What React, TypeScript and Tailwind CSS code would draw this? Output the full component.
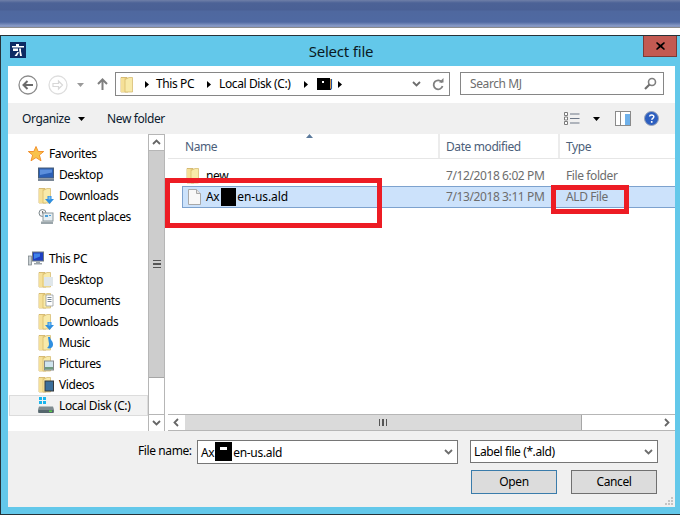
import type { ReactNode } from 'react'

const Folder = ({ children }: { children?: ReactNode }) => (
  <svg width="16" height="17" viewBox="0 0 16 17" className="shrink-0">
    <path d="M1 1.500h6l1 1v13.500H1z" fill="#e9cd7c" stroke="#c9a855" strokeWidth="0.7" />
    <path d="M5 3.500l4-2h3.500v14.500H5z" fill="#f8eaa9" stroke="#d2b566" strokeWidth="0.7" />
    <path d="M1 2h3.500v14H1z" fill="#f5e098" />
    {children}
  </svg>
)

const ArrowDownOverlay = () => (
  <>
    <path d="M9.500 9h4v3H16l-4.500 5L7 12h2.500z" fill="#2f8fe0" />
    <path d="M10.500 9.500h2v3h-2z" fill="#7cc0f5" />
  </>
)

const Monitor = () => (
  <svg width="16" height="15" viewBox="0 0 16 15" className="shrink-0">
    <rect x="0.500" y="1" width="15" height="10" fill="#2b5fb5" stroke="#4a5f78" />
    <path d="M2 2.500h12v3L2 8z" fill="#5c8fdc" />
    <rect x="0" y="11.500" width="16" height="2.500" fill="#7a8796" />
  </svg>
)

const Star = () => (
  <svg width="16" height="16" viewBox="0 0 16 16" className="shrink-0">
    <path d="M8 .500l2.200 5H15.700l-4.300 3.600 1.600 5.700L8 11.600l-5 3.200 1.600-5.700L.300 5.500h5.500z" fill="#f9c24a" stroke="#f08a24" strokeWidth="0.9" />
  </svg>
)

const Recent = () => (
  <svg width="16" height="16" viewBox="0 0 16 16" className="shrink-0">
    <circle cx="4.500" cy="4" r="3.500" fill="#f4f4f4" stroke="#7f8a8f" />
    <path d="M4.500 2v2.200H6.500" stroke="#555" fill="none" strokeWidth="0.8" />
    <rect x="5" y="4" width="10" height="8" fill="#e6eef2" stroke="#8b979c" />
    <path d="M7 6h3v2H7zM11 6h2v1h-2z" fill="#4c9fd8" />
    <rect x="3" y="12.500" width="12" height="2.500" fill="#9aa5aa" />
  </svg>
)

const ThisPc = () => (
  <svg width="16" height="16" viewBox="0 0 16 16" className="shrink-0">
    <rect x="0.500" y="5" width="3" height="9" fill="#c9d0d3" stroke="#767f84" strokeWidth="0.7" />
    <rect x="4.500" y="1" width="11" height="9" fill="#1d3fc2" stroke="#6e7a80" />
    <path d="M6 2.500h6v3L6 8z" fill="#3f82e8" />
    <path d="M8 10.500h4v1.500h2v1.500H6V12h2z" fill="#9da6ab" />
  </svg>
)

const Disk = () => (
  <svg width="16" height="17" viewBox="0 0 16 17" className="shrink-0">
    <path d="M1 0h3v3H1zM5 0h3v3H5zM1 4h3v3H1zM5 4h3v3H5z" fill="#19b5ee" />
    <path d="M1 9.500h14l1 3v3H0v-3z" fill="#7f8b90" />
    <rect x="0.500" y="13" width="15" height="3" fill="#55666d" />
    <rect x="11" y="13.500" width="3" height="1.500" fill="#56d147" />
  </svg>
)

const Caret = ({ color = '#000' }: { color?: string }) => (
  <svg width="7" height="4" viewBox="0 0 7 4" className="shrink-0">
    <path d="M0 0h7L3.500 4z" fill={color} />
  </svg>
)

const BreadArrow = () => (
  <svg width="4" height="7" viewBox="0 0 4 7" className="shrink-0">
    <path d="M0 0l4 3.500L0 7z" fill="#000" />
  </svg>
)

const Chevron = ({ color = '#6d6d6d' }: { color?: string }) => (
  <svg width="9" height="6" viewBox="0 0 9 6" className="shrink-0">
    <path d="M1 1l3.500 3.500L8 1" fill="none" stroke={color} strokeWidth="1.800" />
  </svg>
)

const NavItem = ({ icon, label, head, active }: { icon: ReactNode; label: string; head?: boolean; active?: boolean }) => (
  <div
    className={`h-[21px] flex items-center border ${active ? 'bg-[#f2f2f2] border-[#dcdcdc]' : 'border-transparent'} ${head ? 'pl-[18px] gap-[5px]' : 'pl-[28px] gap-[5px]'} ml-px`}
  >
    <div className="w-4 flex justify-center">{icon}</div>
    <span className="text-[#000] whitespace-nowrap">{label}</span>
  </div>
)

const ScrollGrip = ({ vertical }: { vertical?: boolean }) => (
  <div className={`flex gap-[2px] ${vertical ? 'flex-col w-[8px]' : 'h-[7px]'}`}>
    <div className={`bg-[#555] ${vertical ? 'h-[1.500px]' : 'w-[1.500px]'}`} />
    <div className={`bg-[#555] ${vertical ? 'h-[1.500px]' : 'w-[1.500px]'}`} />
    <div className={`bg-[#555] ${vertical ? 'h-[1.500px]' : 'w-[1.500px]'}`} />
  </div>
)

export default function App() {
  return (
    <div className="relative w-[680px] h-[515px] overflow-hidden bg-white text-[12px] leading-none tracking-[-0.4px] font-['Noto_Sans','Open_Sans',sans-serif]">
      {/* window behind */}
      <div className="h-[28px] bg-[linear-gradient(#6f7fa8_0px,#4c6296_3px,#4a6095_10px,#4f689f_11px,#4f69a2_22px,#8b9dc8_26px,#6c7fae_28px)] border-b border-[#8a8a8a]" />
      <div className="h-[7px] bg-white" />

      {/* dialog */}
      <div className="h-[480px] bg-[#63c8ea] border-t border-l border-b border-[#263238] flex flex-col">
        <div className="h-[30px] flex items-start shrink-0">
          <div className="ml-[9px] mt-[6px] w-4 h-4 bg-[#0c2a63] flex items-center justify-center">
            <svg width="14" height="14" viewBox="0 0 14 14">
              <path d="M1 3h4V1h3v2h5v1.500H1zM2 5.500h5V8H2zM8 5.500h2v3l1 4.500h-2zM6.500 9H8l-2 4H3.500z" fill="#fff" />
            </svg>
          </div>
          <div className="flex-1 text-center text-[15px] leading-[30px] text-[#0a1a24] pl-[13px] tracking-[-0.2px]">Select file</div>
          <div className="w-[34px] h-[21px] mr-[3px] bg-[#c35a52] border border-[#7c3a36] border-t-0 flex items-center justify-center">
            <svg width="9" height="8" viewBox="0 0 9 8">
              <path d="M1 0l3.500 2.800L8 0l1 1-3 3 3 3-1 1-3.500-2.800L1 8 0 7l3-3-3-3z" fill="#000" />
            </svg>
          </div>
        </div>

        <div className="ml-[7px] mr-[5px] h-[441px] bg-white flex flex-col">
          {/* address row */}
          <div className="h-[37px] flex items-start shrink-0">
            <div className="w-[107px] h-full flex items-center pl-[10px]">
              <svg width="20" height="20" viewBox="0 0 20 20" className="shrink-0">
                <circle cx="10" cy="10" r="9" fill="#fff" stroke="#8c8c8c" strokeWidth="1.300" />
                <path d="M15 10H6M9.500 6L5.500 10l4 4" fill="none" stroke="#6b6b6b" strokeWidth="2" />
              </svg>
              <svg width="20" height="20" viewBox="0 0 20 20" className="shrink-0 ml-[10px]">
                <circle cx="10" cy="10" r="9" fill="#fff" stroke="#dedede" strokeWidth="1.300" />
                <path d="M5 8.500h5.500V6l4 4-4 4v-2.500H5z" fill="none" stroke="#d8d8d8" strokeWidth="1.200" />
              </svg>
              <div className="ml-[9px]"><Caret color="#9a9a9a" /></div>
              <svg width="11" height="13" viewBox="0 0 11 13" className="shrink-0 ml-[13px]">
                <path d="M5.500 12V2M1 6l4.500-4.500L10 6" fill="none" stroke="#7f7f7f" strokeWidth="2" />
              </svg>
            </div>
            <div className="mt-[6px] w-[335px] h-[24px] border border-[#868686] flex items-center text-[#000] shrink-0">
              <div className="ml-[4px]"><Folder /></div>
              <div className="ml-[9px]"><BreadArrow /></div>
              <span className="ml-[7px]">This PC</span>
              <div className="ml-[13px]"><BreadArrow /></div>
              <span className="ml-[8px]">Local Disk (C:)</span>
              <div className="ml-[13px]"><BreadArrow /></div>
              <div className="ml-[9px] w-[13px] h-[12px] bg-black flex items-start justify-center"><div className="w-[2px] h-[2px] bg-white mt-[3px]" /></div>
              <span>J</span>
              <div className="ml-[6px]"><BreadArrow /></div>
              <div className="ml-auto mr-[5px] flex items-center gap-[11px]">
                <Chevron />
                <svg width="12" height="13" viewBox="0 0 12 13">
                  <path d="M10 4.500A4.500 4.500 0 1 0 10.500 8" fill="none" stroke="#7f7f7f" strokeWidth="1.800" />
                  <path d="M7 4.500h4.500V0z" fill="#7f7f7f" />
                </svg>
              </div>
            </div>
            <div className="mt-[6px] ml-[10px] w-[204px] h-[23px] border border-[#868686] flex items-center pl-[9px] pr-[4px] text-[#6d6d6d] shrink-0">
              <span>Search MJ</span>
              <svg width="13" height="13" viewBox="0 0 13 13" className="ml-auto mr-[2px]">
                <circle cx="8" cy="5" r="3.500" fill="none" stroke="#7f7f7f" strokeWidth="1.600" />
                <path d="M5.500 7.500L1 12" stroke="#6f6f6f" strokeWidth="2.200" />
              </svg>
            </div>
          </div>

          {/* toolbar */}
          <div className="h-[31px] bg-[#f0f0f0] flex items-center shrink-0 text-[#0a1a2e]">
            <span className="ml-[14px]">Organize</span>
            <div className="ml-[8px]"><Caret /></div>
            <span className="ml-[22px]">New folder</span>
            <div className="ml-auto flex items-center">
              <svg width="16" height="13" viewBox="0 0 16 13">
                <path d="M.500 .500h3v3h-3zM.500 5h3v3h-3zM.500 9.500h3v3h-3z" fill="#fff" stroke="#7b7b7b" />
                <path d="M6 2h9.500M6 6.500h9.500M6 11h9.500" stroke="#6c7686" />
              </svg>
              <div className="ml-[13px]"><Caret /></div>
              <svg width="16" height="15" viewBox="0 0 16 15" className="ml-[15px]">
                <rect x="0.500" y="0.500" width="15" height="14" fill="#fff" stroke="#8a8a8a" />
                <path d="M5.500 1v13" stroke="#8a8a8a" />
                <rect x="10" y="3" width="5" height="11" fill="#6fb1ea" />
              </svg>
              <svg width="15" height="15" viewBox="0 0 15 15" className="ml-[13px] mr-[16px]">
                <circle cx="7.500" cy="7.500" r="7" fill="#2d5fc0" stroke="#9aa4b8" />
                <path d="M5.500 5.500c.3-2 4.500-2 4.300.3 0 1.500-2 1.500-2 3" fill="none" stroke="#fff" strokeWidth="1.500" />
                <rect x="6.900" y="10" width="1.600" height="1.800" fill="#fff" />
              </svg>
            </div>
          </div>

          {/* main pane */}
          <div className="h-[297px] flex shrink-0">
            <div className="w-[140px] pt-[9px] shrink-0">
              <NavItem head icon={<Star />} label="Favorites" />
              <NavItem icon={<Monitor />} label="Desktop" />
              <NavItem icon={<Folder><ArrowDownOverlay /></Folder>} label="Downloads" />
              <NavItem icon={<Recent />} label="Recent places" />
              <div className="h-[21px]" />
              <NavItem head icon={<ThisPc />} label="This PC" />
              <NavItem icon={<Folder><rect x="6" y="6" width="9" height="9" fill="#dfe6ea" /></Folder>} label="Desktop" />
              <NavItem icon={<Folder><path d="M8 3h7v11H8z" fill="#fff" stroke="#8a8f92" strokeWidth="0.700" /><path d="M9.500 5.500h4M9.500 7.500h4M9.500 9.500h4" stroke="#7b8a9a" /></Folder>} label="Documents" />
              <NavItem icon={<Folder><ArrowDownOverlay /></Folder>} label="Downloads" />
              <NavItem icon={<Folder><path d="M10 3h2c0 3 3.500 4 3 8-.3 3-3 4-6 3 1-1 2-2 2-4z" fill="#2f8fe0" /></Folder>} label="Music" />
              <NavItem icon={<Folder><rect x="6.500" y="6" width="9" height="9" fill="#cfe4ee" stroke="#85898c" /><path d="M7 12h8v2.500H7z" fill="#6f9a7e" /></Folder>} label="Pictures" />
              <NavItem icon={<Folder><rect x="7" y="5" width="8.500" height="10" fill="#3b6f9c" stroke="#33393d" /></Folder>} label="Videos" />
              <NavItem active icon={<Disk />} label="Local Disk (C:)" />
            </div>

            {/* nav scrollbar */}
            <div className="w-[17px] flex flex-col border border-[#b6b6b6] border-y-0 shrink-0">
              <div className="h-[17px] border-y border-[#b6b6b6] flex items-center justify-center rotate-180"><Chevron color="#666" /></div>
              <div className="h-[227px] bg-[#cdcdcd] border-b border-[#a6a6a6] flex items-center justify-center"><ScrollGrip vertical /></div>
              <div className="flex-1" />
              <div className="h-[17px] border-t border-[#b6b6b6] flex items-center justify-center"><Chevron color="#666" /></div>
            </div>

            {/* file list */}
            <div className="flex-1 ml-[3px] flex flex-col min-w-0 relative">
              <div className="h-[25px] flex text-[#4c607a] border-b border-[#e6e6e6] shrink-0">
                <div className="w-[272px] border-r-2 border-[#ececec] pl-[17px] flex items-center pt-[1px]">Name</div>
                <div className="w-[120px] border-r-2 border-[#ececec] pl-[6px] flex items-center pt-[1px]">Date modified</div>
                <div className="pl-[6px] flex items-center pt-[1px]">Type</div>
              </div>
              <div className="flex-1 pt-[6px] text-[#6d6d6d]">
                <div className="h-[21px] flex items-center">
                  <div className="w-[272px] pl-[18px] flex items-center gap-[4px] text-[#000]">
                    <Folder />
                    <span>new</span>
                  </div>
                  <div className="w-[120px] pl-[6px]">7/12/2018 6:02 PM</div>
                  <div className="pl-[6px]">File folder</div>
                </div>
                <div className="h-[22px] ml-[14px] flex items-center bg-[#cce2fb] border border-[#7da2ce] border-r-0">
                  <div className="w-[257px] pl-[5px] flex items-center text-[#000]">
                    <svg width="13" height="16" viewBox="0 0 13 16" className="shrink-0">
                      <path d="M.500 .500h8l4 4v11H.500z" fill="#f8f8f8" stroke="#a8a8a8" />
                      <path d="M8.500 .500v4h4" fill="#e4e4e4" stroke="#a8a8a8" />
                    </svg>
                    <span className="ml-[5px]">Ax</span>
                    <div className="w-[15px] h-[18px] bg-black ml-[2px]" />
                    <span className="ml-px tracking-[-0.1px]">en-us.ald</span>
                  </div>
                  <div className="w-[120px] pl-[6px]">7/13/2018 3:11 PM</div>
                  <div className="pl-[6px]">ALD File</div>
                </div>
              </div>
              {/* horizontal scrollbar */}
              <div className="h-[17px] flex border border-[#b6b6b6] border-x-0 shrink-0">
                <div className="w-[17px] border-x border-[#b6b6b6] flex items-center justify-center rotate-90"><Chevron color="#666" /></div>
                <div className="w-[397px] bg-[#dadada] border-r border-[#a6a6a6] flex items-center justify-center"><ScrollGrip /></div>
                <div className="flex-1" />
                <div className="w-[17px] border-x border-[#b6b6b6] flex items-center justify-center -rotate-90"><Chevron color="#666" /></div>
              </div>
              {/* sort arrow */}
              <div className="absolute left-[138px] top-0 rotate-180"><Caret color="#5b7a9c" /></div>
            </div>
          </div>

          {/* bottom */}
          <div className="flex-1 bg-[#f0f0f0] flex flex-col relative">
            <div className="mt-[9px] flex items-start">
              <span className="ml-[130px] w-[59px] leading-[22px] text-[#000]">File name:</span>
              <div className="w-[261px] h-[24px] bg-white border border-[#767676] flex items-center pl-[3px] text-[#000]">
                <span className="pt-[2px]">Ax</span>
                <div className="w-[17px] h-[19px] bg-black flex items-start justify-center ml-px mb-[2px]"><div className="w-[7px] h-[3px] bg-white mt-[5px]" /></div>
                <span className="pt-[2px] ml-px tracking-[-0.3px]">en-us.ald</span>
                <div className="ml-auto mr-[4px]"><Chevron /></div>
              </div>
              <div className="ml-[12px] w-[188px] h-[23px] bg-white border border-[#767676] flex items-center pl-[3px] text-[#000]">
                <span>Label file (*.ald)</span>
                <div className="ml-auto mr-[4px]"><Chevron /></div>
              </div>
            </div>
            <div className="mt-[6px] flex ml-[463px]">
              <button className="w-[86px] h-[24px] bg-[#dcdcdc] border border-[#3a7cab] text-[#000]">Open</button>
              <button className="ml-[14px] w-[86px] h-[24px] bg-[#dcdcdc] border border-[#707070] text-[#000]">Cancel</button>
            </div>
            {/* resize grip */}
            <svg width="9" height="9" viewBox="0 0 9 9" className="absolute right-[1px] bottom-[1px]">
              <path d="M6 0h2v2H6zM3 3h2v2H3zM6 3h2v2H6zM0 6h2v2H0zM3 6h2v2H3zM6 6h2v2H6z" fill="#c4c4c4" />
            </svg>
          </div>
        </div>
      </div>

      {/* annotations */}
      <div className="absolute left-[165px] top-[178px] w-[217px] h-[50px] border-[5px] border-[#ed1c24]" />
      <div className="absolute left-[551px] top-[185px] w-[78px] h-[29px] border-[5px] border-[#ed1c24]" />
    </div>
  )
}
